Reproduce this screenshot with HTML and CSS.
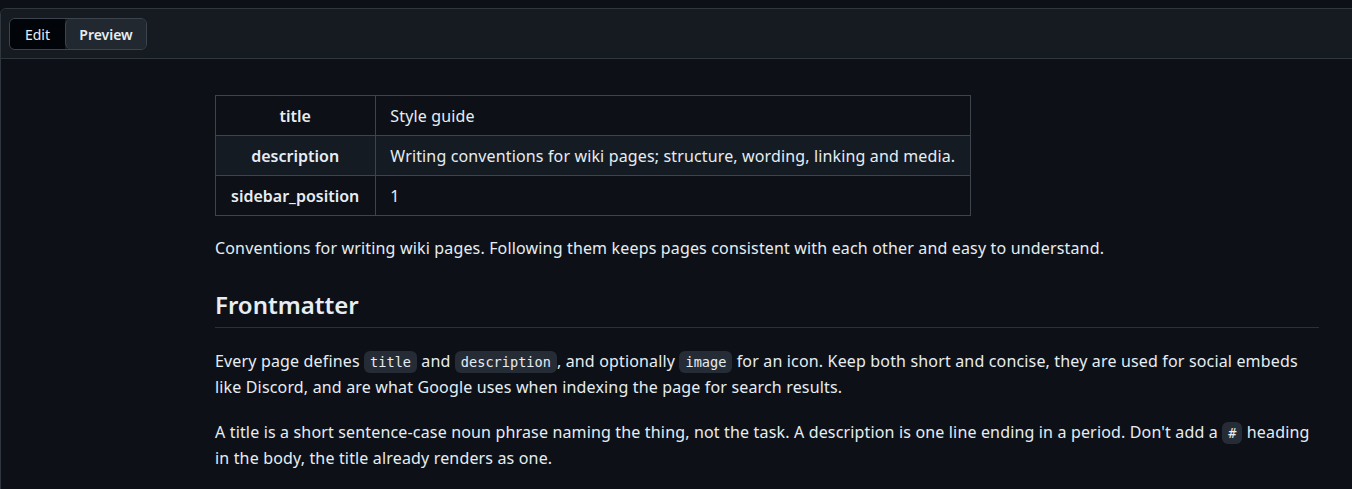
FILE: index.html
```html
<!DOCTYPE html>
<html lang="en">
<head>
<meta charset="utf-8">
<title>Style guide</title>
<link rel="stylesheet" href="styles.css">
</head>
<body>
<div class="editor">
  <div class="editor-head">
    <div class="tabs">
      <button class="tab">Edit</button>
      <button class="tab tab-active">Preview</button>
    </div>
  </div>
  <div class="preview">
    <div class="markdown">
      <table class="fm">
        <tbody>
          <tr><th>title</th><td>Style guide</td></tr>
          <tr><th>description</th><td>Writing conventions for wiki pages; structure, wording, linking and media.</td></tr>
          <tr><th>sidebar_position</th><td>1</td></tr>
        </tbody>
      </table>
      <p class="lead">Conventions for writing wiki pages. Following them keeps pages consistent with each other and easy to understand.</p>
      <h2>Frontmatter</h2>
      <p>Every page defines <code>title</code> and <code>description</code>, and optionally <code>image</code> for an icon. Keep both short and concise, they are used for social embeds like Discord, and are what Google uses when indexing the page for search results.</p>
      <p>A title is a short sentence-case noun phrase naming the thing, not the task. A description is one line ending in a period. Don't add a <code>#</code> heading in the body, the title already renders as one.</p>
    </div>
  </div>
</div>
</body>
</html>
```
FILE: styles.css
```css
html, body {
  margin: 0;
  padding: 0;
  background: #0d1117;
  color: #e6edf3;
  font-family: "Noto Sans", "Open Sans", sans-serif;
  font-size: 16px;
  overflow: hidden;
}

.editor {
  margin: 8px -10px 0 0;
  border: 1px solid #30363d;
  border-radius: 6px;
  min-height: 600px;
}

.editor-head {
  background: #161b22;
  border-bottom: 1px solid #30363d;
  border-radius: 6px 6px 0 0;
  padding: 9px 8px 8px;
  display: flex;
}

.tabs {
  display: flex;
  border: 1px solid #3d444d;
  border-radius: 6px;
  overflow: hidden;
  height: 32px;
  box-sizing: border-box;
}

.tab {
  font-family: inherit;
  font-size: 14px;
  color: #e6edf3;
  border: 0;
  margin: 0;
  background: #010409;
  height: 30px;
  line-height: 30px;
  padding: 1px 0 0;
}

.tab:first-child { width: 55px; }

.tab-active {
  background: #212830;
  font-weight: 600;
  width: 81px;
  border-left: 1px solid #3d444d;
  border-radius: 6px 0 0 6px;
}

.preview {
  padding: 36px 32px 0 214px;
}

.markdown {
  width: 1104px;
  line-height: 26px;
  letter-spacing: 0.16px;
}

.fm {
  border-collapse: collapse;
  margin: 0 0 19px;
}

.fm th, .fm td {
  border: 1px solid #3d444d;
  padding: 7.5px 15px 7.5px 14px;
  line-height: 24px;
}

.fm th {
  font-weight: 600;
  text-align: center;
  letter-spacing: 0;
  padding-left: 15px;
  padding-right: 16px;
}

.fm td { text-align: left; letter-spacing: 0.14px; }

.fm tr:nth-child(2) { background: #151b23; }

p {
  margin: 0 0 19px;
}

h2 {
  font-size: 24px;
  font-weight: 600;
  line-height: 30px;
  letter-spacing: 0;
  margin: 29px 0 20px;
  padding-bottom: 7px;
  border-bottom: 1px solid #2b3139;
}

code {
  display: inline-block;
  font-family: "DejaVu Sans Mono", "Liberation Mono", monospace;
  font-size: 13.6px;
  line-height: 16px;
  letter-spacing: 0;
  background: #262c36;
  border-radius: 6px;
  padding: 3px 6px;
}
```
